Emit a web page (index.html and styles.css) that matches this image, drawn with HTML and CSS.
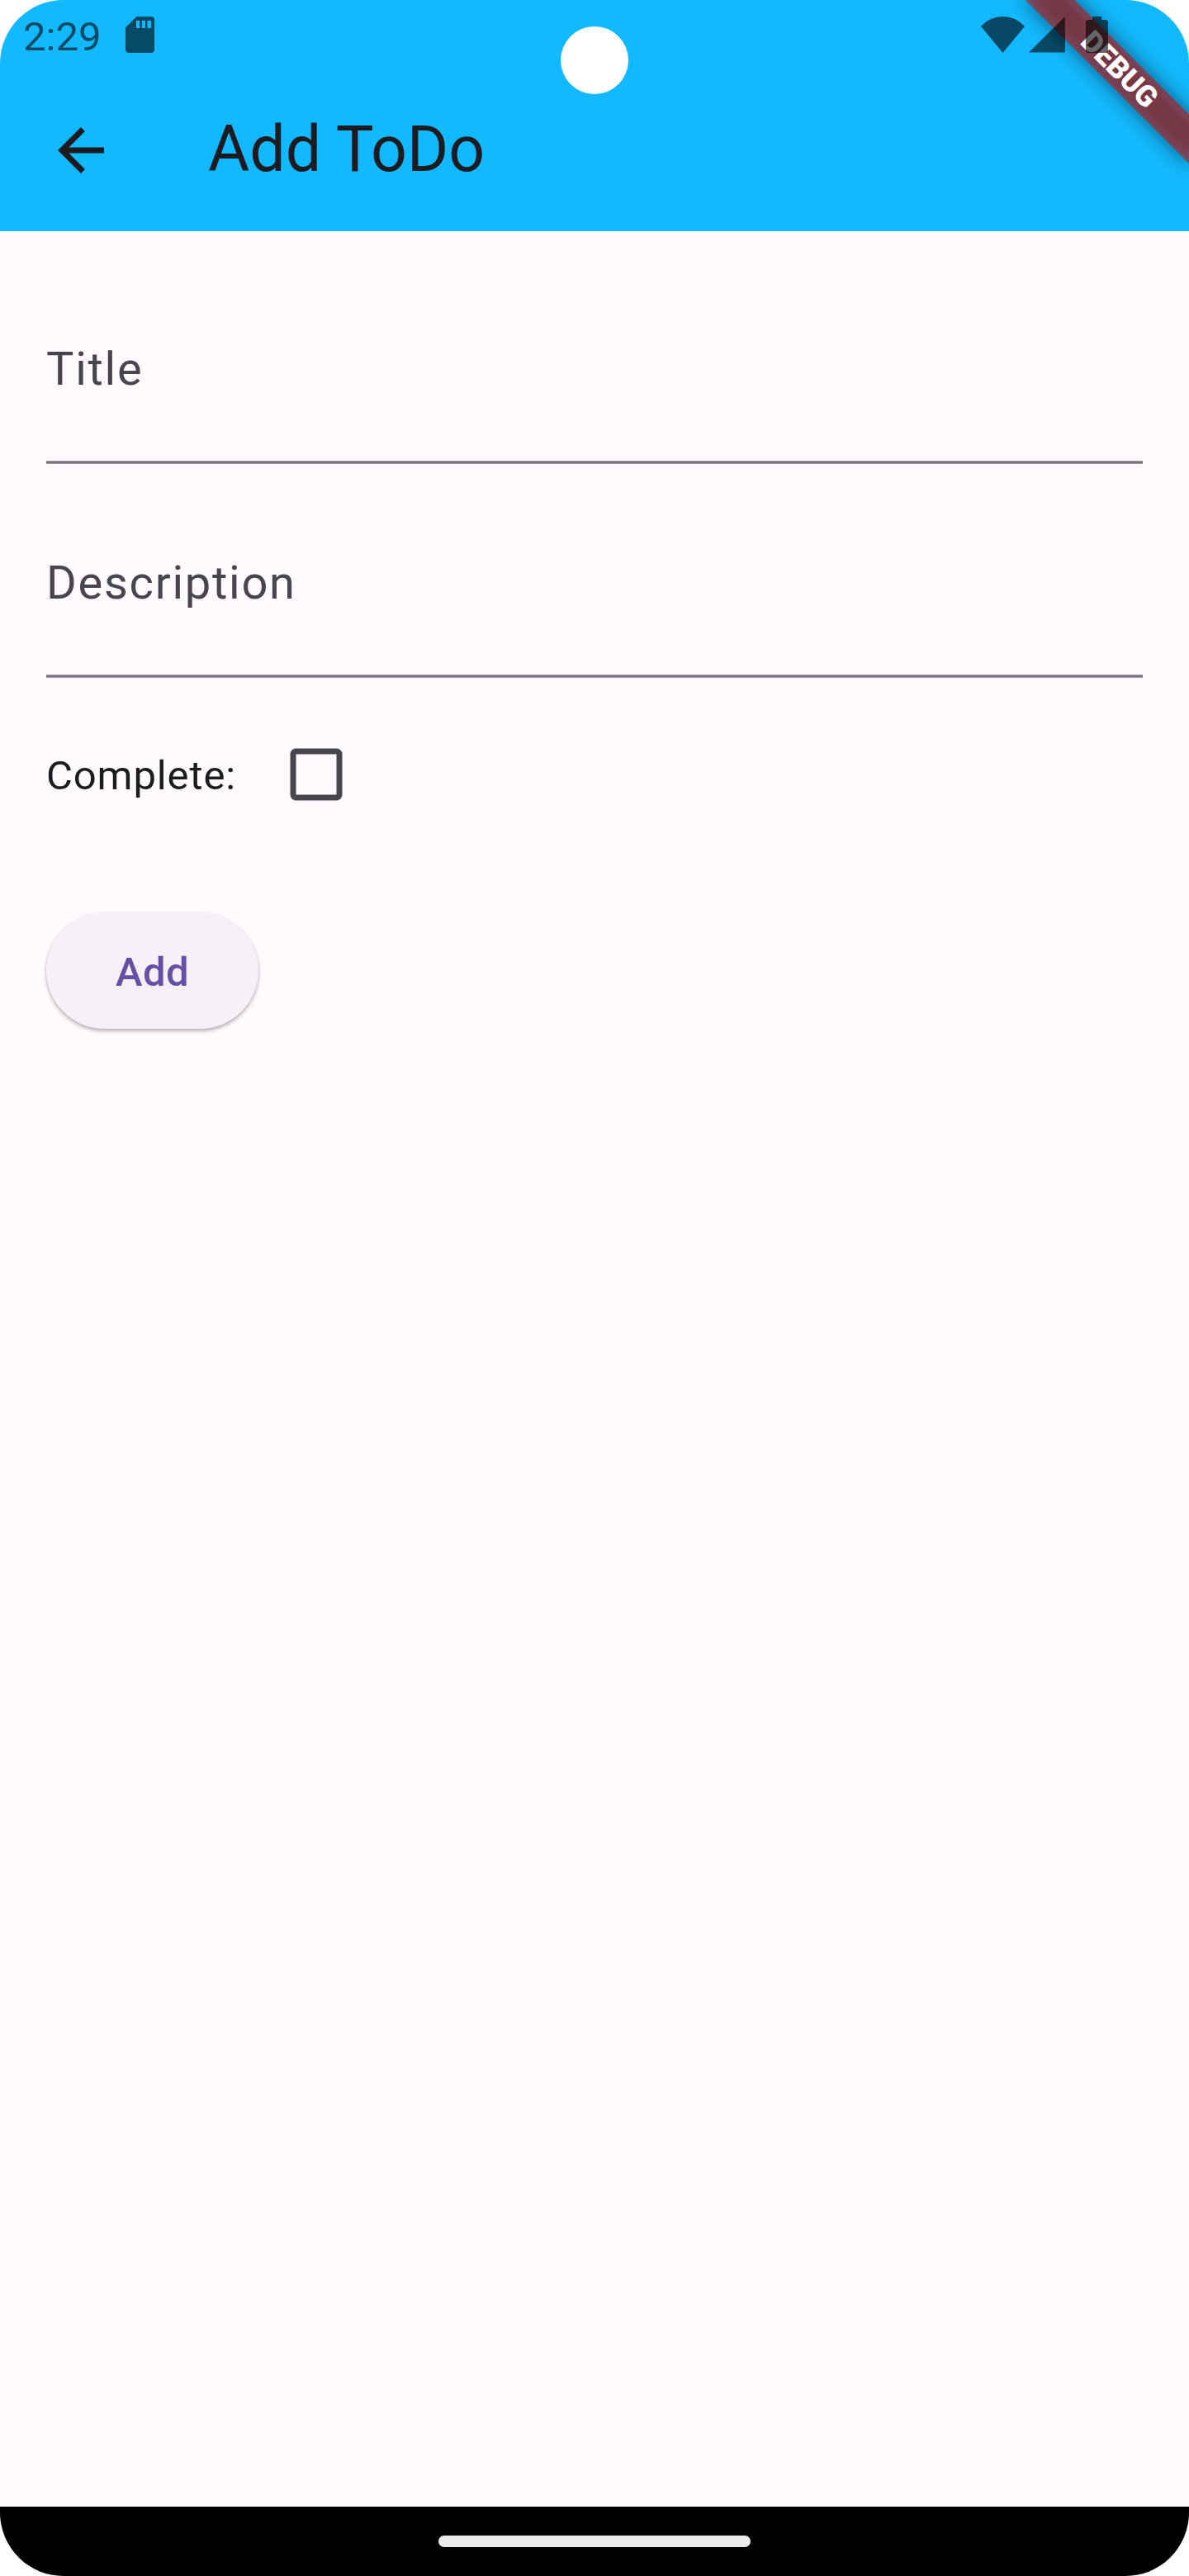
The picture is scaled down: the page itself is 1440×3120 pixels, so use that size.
FILE: index.html
```html
<!DOCTYPE html>
<html lang="en">
<head>
<meta charset="utf-8">
<title>Add ToDo</title>
<link rel="stylesheet" href="styles.css">
</head>
<body>
<div class="screen">
  <header class="app-header">
    <div class="status-bar">
      <span class="clock">2:29</span>
      <svg class="sd-card" width="35" height="44" viewBox="0 0 35 44"><path fill-rule="evenodd" d="M13.500 0H31a4 4 0 0 1 4 4V40a4 4 0 0 1-4 4H4a4 4 0 0 1-4-4V13.300ZM13 5V14H17V5ZM20 5V14H24V5ZM26.500 5V14H31V5Z"/></svg>
      <div class="status-icons">
        <svg width="53" height="44" viewBox="0 0 53 44"><path d="M0 12Q11 0 26.500 0T53 12L26.500 44Z"/></svg>
        <svg width="44" height="44" viewBox="0 0 44 44"><path d="M44 0V43.500H0Z"/></svg>
        <svg class="battery" width="27" height="44" viewBox="0 0 27 44"><path d="M8 0H19V4H24a3 3 0 0 1 3 3V41a3 3 0 0 1-3 3H3a3 3 0 0 1-3-3V7a3 3 0 0 1 3-3H8Z"/></svg>
      </div>
    </div>
    <div class="toolbar">
      <svg class="back" width="84" height="84" viewBox="0 0 24 24"><path d="M20 11H7.830l5.590-5.590L12 4l-8 8 8 8 1.410-1.410L7.830 13H20z"/></svg>
      <h1 class="title">Add ToDo</h1>
    </div>
    <div class="camera"></div>
    <div class="banner"><span class="banner-text">DEBUG</span></div>
  </header>
  <main class="form">
    <div class="field">Title</div>
    <div class="field">Description</div>
    <div class="check-row">
      <span class="check-label">Complete:</span>
      <svg width="168" height="168" viewBox="0 0 168 168"><rect class="checkbox" x="56" y="56" width="56" height="56" rx="3.500"/></svg>
    </div>
    <button class="add-button">Add</button>
  </main>
  <footer class="nav-bar"><div class="nav-pill"></div></footer>
</div>
</body>
</html>
```
FILE: styles.css
```css
body {
  margin: 0;
  background: #fff;
  font-family: Roboto, "Noto Sans", sans-serif;
}

.screen {
  display: flex;
  flex-direction: column;
  width: 1440px;
  height: 3120px;
  overflow: hidden;
  border-radius: 77px;
  background: #fffbfe;
}

.app-header {
  position: relative;
  height: 280px;
  flex: none;
  overflow: hidden;
  background: #13b9ff;
}

.status-bar {
  position: relative;
  z-index: 2;
  display: flex;
  align-items: flex-start;
  height: 84px;
  box-sizing: border-box;
  padding: 16px 98px 0 28px;
  opacity: 0.6;
}

.clock {
  width: 124px;
  font-size: 49px;
  line-height: 57px;
}

.sd-card {
  margin-top: 4px;
}

.status-icons {
  display: flex;
  gap: 5px;
  margin: 4px 0 0 auto;
}

.battery {
  margin-left: 20px;
}

.toolbar {
  display: flex;
  align-items: center;
  height: 196px;
  padding-left: 56px;
}

.back {
  fill: #1c1b1f;
}

.title {
  margin: 0 0 0 112px;
  padding-bottom: 2px;
  color: #1c1b1f;
  font-size: 77px;
  font-weight: 400;
  line-height: 90px;
}

.camera {
  position: absolute;
  top: 32px;
  left: 679px;
  width: 82px;
  height: 82px;
  border-radius: 50%;
  background: #fff;
}

/* Diagonal ribbon, rotated about the top right corner */
.banner {
  position: absolute;
  z-index: 1;
  top: 98px;
  right: -140px;
  width: 280px;
  height: 42px;
  transform: rotate(45deg);
  transform-origin: 140px -98px;
  text-align: center;
}

.banner::before,
.banner::after {
  content: "";
  position: absolute;
  inset: 0;
}

.banner::before {
  background: rgba(0, 0, 0, 0.5);
  filter: blur(12.6px);
}

.banner::after {
  background: rgba(183, 28, 28, 0.627);
}

.banner-text {
  position: relative;
  z-index: 1;
  color: #fff;
  font-size: 35.7px;
  font-weight: 900;
  line-height: 42px;
}

.form {
  flex: 1;
  padding: 23px 56px 0;
}

.field {
  height: 259px;
  box-sizing: border-box;
  padding-top: 111px;
  background: linear-gradient(#9c98a0 1px, #79747e 1px 3px, #9c98a0 3px) bottom / 100% 4px no-repeat;
  color: #49454f;
  font-size: 56px;
  line-height: 66px;
  letter-spacing: 1.75px;
}

.check-row {
  display: flex;
  align-items: center;
  height: 168px;
  margin-top: 33px;
}

.check-label {
  width: 243px;
  padding-top: 3px;
  color: #1c1b1f;
  font-size: 49px;
  line-height: 57px;
  letter-spacing: 0.875px;
}

.checkbox {
  fill: none;
  stroke: #49454f;
  stroke-width: 7;
}

.add-button {
  display: block;
  width: 257px;
  height: 141px;
  margin-top: 83px;
  padding: 3px 0 0;
  border: 0;
  border-radius: 71px;
  background: #f6f1f9;
  box-shadow: 0 3px 5px rgba(0, 0, 0, 0.26), 0 1px 3px rgba(0, 0, 0, 0.08);
  color: #6750a4;
  font: 500 49px/57px Roboto, "Noto Sans", sans-serif;
  letter-spacing: 0.35px;
}

.nav-bar {
  display: flex;
  justify-content: center;
  height: 84px;
  flex: none;
  box-sizing: border-box;
  padding-top: 35px;
  background: #000;
}

.nav-pill {
  width: 378px;
  height: 14px;
  border-radius: 7px;
  background: #ebebeb;
}
```
